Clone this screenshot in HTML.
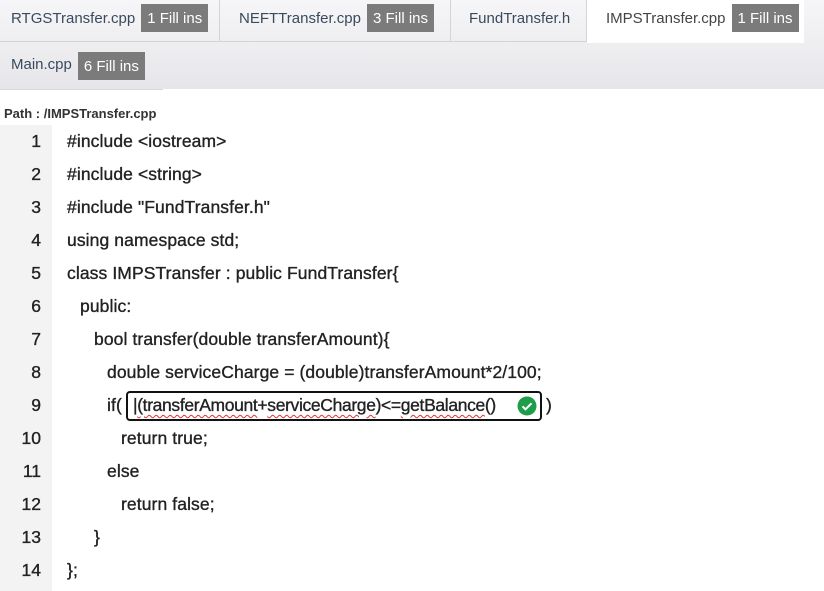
<!DOCTYPE html>
<html><head><style>
body{margin:0;width:824px;height:591px;overflow:hidden;background:#fff;font-family:"Liberation Sans",sans-serif;color:#333}
.bar{position:absolute;left:0;top:0;width:824px;height:89px;background:linear-gradient(#f6f6f8,#e6e6ea)}
.tab{position:absolute;top:0;height:42px;border-right:1px solid #d4d4d8;border-bottom:1px solid #d4d4d8;box-sizing:border-box;font-size:15px;line-height:38px;color:#3a4a5e;padding-left:11px;white-space:nowrap}
.tab.act{background:#fff;border:none;color:#444;height:43px}
.b{display:inline-block;background:#7b7b7b;color:#fff;padding:0 6px;height:28px;line-height:29px;margin-left:6px;font-size:15px;vertical-align:top;margin-top:4px}
.path{position:absolute;left:4px;top:106px;font-size:13px;font-weight:bold;color:#333}
.gut{position:absolute;left:0;top:125px;width:52px;height:466px;background:#f3f3f3}
.ln{position:absolute;left:0;width:41px;text-align:right;font-size:17.5px;color:#222;-webkit-text-stroke:0.35px #222}
.c{position:absolute;font-size:17.5px;white-space:pre;color:#222;-webkit-text-stroke:0.35px #222;letter-spacing:0.1px}
.box{position:absolute;left:126px;top:391px;width:416px;height:30px;border:2px solid #111;border-radius:4px;box-sizing:border-box}
.u{text-decoration:underline wavy #e03030;text-decoration-thickness:1px;text-underline-offset:3px}
</style></head><body>
<div class="bar"></div>
<div class="tab" style="left:0;width:220px">RTGSTransfer.cpp<span class="b">1 Fill ins</span></div>
<div class="tab" style="left:220px;width:231px;padding-left:19px">NEFTTransfer.cpp<span class="b">3 Fill ins</span></div>
<div class="tab" style="left:451px;width:136px;padding-left:18px">FundTransfer.h</div>
<div class="tab act" style="left:587px;width:217px;padding-left:19px">IMPSTransfer.cpp<span class="b">1 Fill ins</span></div>
<div class="tab" style="left:0;top:42px;height:47px;border:none;line-height:46px">Main.cpp<span class="b" style="margin-top:10px">6 Fill ins</span></div>
<div style="position:absolute;left:0;top:89px;width:163px;height:1px;background:#d8d8dc"></div>
<div class="path">Path : /IMPSTransfer.cpp</div>
<div class="gut"></div>
<div class="ln" style="top:131px">1</div><div class="c" style="left:67px;top:131px">#include &lt;iostream&gt;</div>
<div class="ln" style="top:164px">2</div><div class="c" style="left:67px;top:164px">#include &lt;string&gt;</div>
<div class="ln" style="top:197px">3</div><div class="c" style="left:67px;top:197px">#include "FundTransfer.h"</div>
<div class="ln" style="top:230px">4</div><div class="c" style="left:67px;top:230px">using namespace std;</div>
<div class="ln" style="top:263px">5</div><div class="c" style="left:67px;top:263px">class IMPSTransfer : public FundTransfer{</div>
<div class="ln" style="top:296px">6</div><div class="c" style="left:80px;top:296px">public:</div>
<div class="ln" style="top:329px">7</div><div class="c" style="left:94px;top:329px">bool transfer(double transferAmount){</div>
<div class="ln" style="top:362px">8</div><div class="c" style="left:107px;top:362px">double serviceCharge = (double)transferAmount*2/100;</div>
<div class="ln" style="top:395px">9</div><div class="c" style="left:107px;top:395px">if(</div>
<div class="box"></div>
<div class="c" style="left:133px;top:395px;letter-spacing:-0.35px">|<span class="u">(transferAmount</span>+<span class="u">serviceCharge</span>)&lt;=<span class="u">getBalance</span>()</div>
<svg style="position:absolute;left:517px;top:396px" width="20" height="20" viewBox="0 0 20 20"><circle cx="10" cy="10" r="9.5" fill="#1e9e4a"/><path d="M5.5 10.3l3 3 6-6" stroke="#fff" stroke-width="2" fill="none"/></svg>
<div class="c" style="left:546px;top:395px">)</div>
<div class="ln" style="top:428px">10</div><div class="c" style="left:121px;top:428px">return true;</div>
<div class="ln" style="top:461px">11</div><div class="c" style="left:107px;top:461px">else</div>
<div class="ln" style="top:494px">12</div><div class="c" style="left:121px;top:494px">return false;</div>
<div class="ln" style="top:527px">13</div><div class="c" style="left:94px;top:527px">}</div>
<div class="ln" style="top:560px">14</div><div class="c" style="left:67px;top:560px">};</div>
</body></html>
